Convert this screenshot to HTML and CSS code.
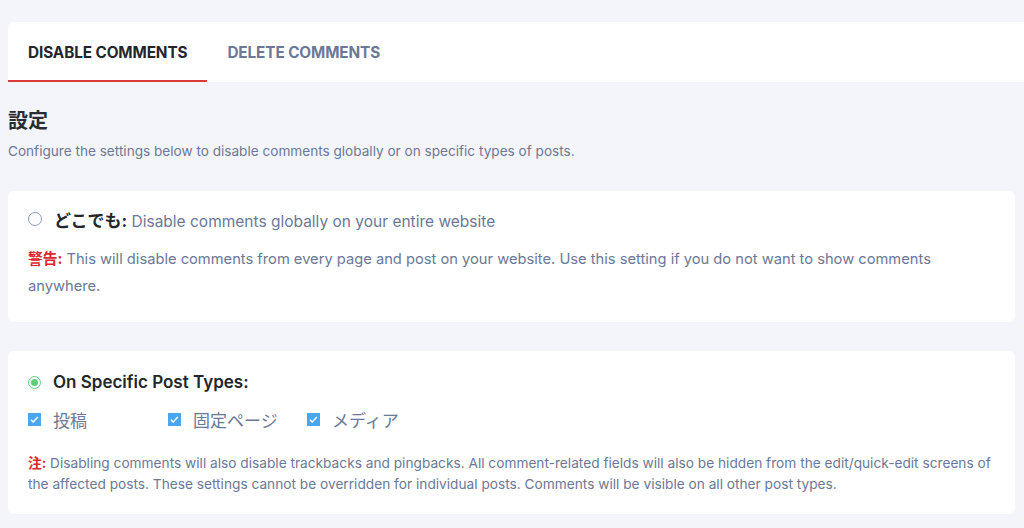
FILE: index.html
```html
<!DOCTYPE html>
<html lang="ja">
<head>
<meta charset="utf-8">
<link rel="stylesheet" href="styles.css">
</head>
<body>
<div class="page">
  <nav class="tabs">
    <div class="tab active">DISABLE COMMENTS</div>
    <div class="tab">DELETE COMMENTS</div>
  </nav>
  <section class="intro">
    <h1 class="title">設定</h1>
    <p class="desc">Configure the settings below to disable comments globally or on specific types of posts.</p>
  </section>
  <div class="card card1">
    <div class="option">
      <span class="radio"></span>
      <span class="opt-label"><b class="opt-strong">どこでも:</b> Disable comments globally on your entire website</span>
    </div>
    <p class="note"><b class="warn">警告:</b> This will disable comments from every page and post on your website. Use this setting if you do not want to show comments anywhere.</p>
  </div>
  <div class="card card2">
    <div class="option">
      <span class="radio checked"></span>
      <span class="opt-label"><b class="opt-strong en">On Specific Post Types:</b></span>
    </div>
    <div class="checks">
      <label class="check c1"><span class="box"><svg viewBox="0 0 14 14" width="14" height="14"><path d="M3.2 7.2l2.4 2.4 5-5.4" fill="none" stroke="#fff" stroke-width="1.6"/></svg></span><span class="check-label">投稿</span></label>
      <label class="check c2"><span class="box"><svg viewBox="0 0 14 14" width="14" height="14"><path d="M3.2 7.2l2.4 2.4 5-5.4" fill="none" stroke="#fff" stroke-width="1.6"/></svg></span><span class="check-label">固定ページ</span></label>
      <label class="check"><span class="box"><svg viewBox="0 0 14 14" width="14" height="14"><path d="M3.2 7.2l2.4 2.4 5-5.4" fill="none" stroke="#fff" stroke-width="1.6"/></svg></span><span class="check-label">メディア</span></label>
    </div>
    <p class="note small"><b class="warn">注:</b> Disabling comments will also disable trackbacks and pingbacks. All comment-related fields will also be hidden from the edit/quick-edit screens of the affected posts. These settings cannot be overridden for individual posts. Comments will be visible on all other post types.</p>
  </div>
</div>
</body>
</html>
```
FILE: styles.css
```css
html, body {
  margin: 0;
  padding: 0;
  background: #f4f5fa;
  font-family: "Inter", "Noto Sans CJK JP", sans-serif;
  color: #6b7898;
}
.page {
  padding: 22px 9px 0 8px;
}
.tabs {
  display: flex;
  background: #fff;
  height: 60px;
  border-radius: 6px 0 0 0;
  margin-right: -9px;
}
.tab {
  padding: 2px 20px 0;
  display: flex;
  align-items: center;
  font-size: 15.3px;
  font-weight: 700;
  color: #6b7898;
  letter-spacing: -0.1px;
  box-sizing: border-box;
  border-bottom: 2px solid transparent;
}
.tab.active {
  color: #23262b;
  border-bottom-color: #d93b3b;
}
.intro {
  padding: 26px 0 0 0;
}
.title {
  margin: 0;
  font-size: 20px;
  line-height: 26px;
  font-weight: 700;
  color: #2a2d33;
}
.desc {
  margin: 9px 0 0;
  font-size: 13.6px;
  line-height: 17px;
}
.card {
  background: #fff;
  border-radius: 6px;
  margin-top: 31px;
  padding: 19px 20px 20px;
}
.card1 {
  padding-top: 16px;
  padding-bottom: 22px;
}
.card2 {
  margin-top: 29px;
  padding-bottom: 19px;
}
.option {
  display: flex;
  align-items: center;
  height: 24px;
}
.radio {
  width: 12px;
  height: 12px;
  border: 1px solid #8c99b3;
  border-radius: 50%;
  margin-right: 12px;
  position: relative;
  flex: none;
}
.radio.checked {
  border: 1.5px solid #5ccf7b;
  width: 11px;
  height: 11px;
}
.radio.checked::after {
  content: "";
  position: absolute;
  left: 2px;
  top: 2px;
  width: 7px;
  height: 7px;
  border-radius: 50%;
  background: #5ccf7b;
}
.opt-label {
  font-size: 15.5px;
  color: #6b7898;
}
.opt-strong {
  font-size: 17px;
  color: #23262b;
  font-weight: 700;
}
.opt-strong.en {
  font-size: 17px;
  font-weight: 600;
}
.note {
  margin: 15px 0 0;
  font-size: 14.7px;
  line-height: 27px;
}
.note.small {
  font-size: 13.7px;
  line-height: 21px;
  margin-top: 21px;
}
.warn {
  color: #e0262b;
  font-weight: 700;
}
.checks {
  display: flex;
  margin-top: 12px;
  height: 26px;
  align-items: center;
}
.check {
  display: flex;
  align-items: center;
}
.c1 { width: 140px; }
.c2 { width: 139px; }
.box {
  width: 13px;
  height: 13px;
  background: #4ba6f0;
  display: flex;
  align-items: center;
  justify-content: center;
  margin-right: 12px;
  flex: none;
}
.box svg { width: 13px; height: 13px; }
.check-label {
  font-size: 17px;
  color: #6b7898;
}
```
